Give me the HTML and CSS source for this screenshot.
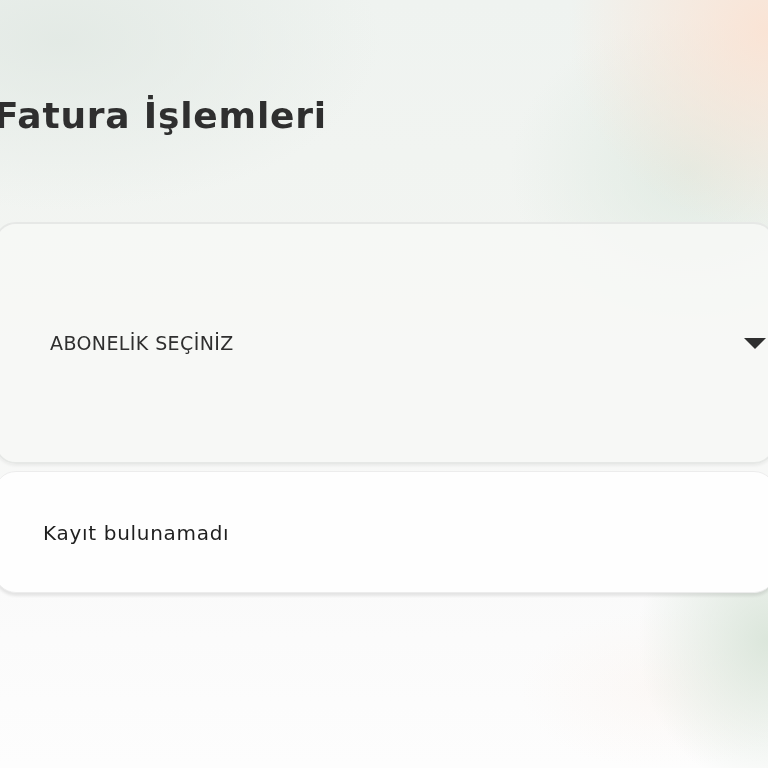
FILE: index.html
```html
<!DOCTYPE html>
<html lang="tr">
<head>
    <meta charset="UTF-8">
    <meta name="viewport" content="width=device-width, initial-scale=1.0">
    <title>Fatura İşlemleri</title>
    <link rel="stylesheet" href="styles.css">
</head>
<body>
    <div class="bg"></div>
    <div class="page">
        <h1 class="title">Fatura İşlemleri</h1>

        <div class="card select-card">
            <span class="select-label">ABONELİK SEÇİNİZ</span>
            <svg class="caret" width="22" height="11" viewBox="0 0 22 11">
                <path d="M0 0 H22 L11 11 Z" fill="#2f2f2f"/>
            </svg>
        </div>

        <div class="card empty-card">
            <span class="empty-text">Kayıt bulunamadı</span>
        </div>
    </div>
</body>
</html>
```

FILE: styles.css
```css
html, body { margin: 0; height: 100%; }
body {
    font-family: "DejaVu Sans", "Open Sans", sans-serif;
    color: #2f2f2f;
    overflow: hidden;
    background: #f5f6f4;
}
.bg {
    position: fixed;
    inset: 0;
    z-index: -1;
    background:
        radial-gradient(ellipse 200px 200px at 768px 30px, rgba(251, 226, 210, 0.9), rgba(251, 226, 210, 0) 100%),
        radial-gradient(ellipse 180px 150px at 690px 170px, rgba(222, 233, 224, 0.8), rgba(222, 233, 224, 0) 100%),
        radial-gradient(ellipse 320px 170px at 60px 40px, rgba(226, 233, 228, 0.9), rgba(226, 233, 228, 0) 100%),
        radial-gradient(ellipse 130px 150px at 768px 640px, rgba(216, 228, 216, 0.9), rgba(216, 228, 216, 0) 100%),
        radial-gradient(ellipse 140px 80px at 660px 690px, rgba(250, 238, 230, 0.3), rgba(250, 238, 230, 0) 100%),
        linear-gradient(180deg, #eff3f0 0%, #f3f5f2 40%, #fafafa 75%, #fdfdfd 100%);
}
.page {
    margin-left: -6px;
    width: 782px;
    padding-top: 88px;
}
.title {
    margin: 0 0 78px 0;
    font-size: 36px;
    line-height: 56px;
    font-weight: 700;
    letter-spacing: 0.8px;
    color: #2f2f2f;
}
.card {
    box-sizing: border-box;
    border-radius: 22px;
    display: flex;
    align-items: center;
}
.select-card {
    height: 242px;
    padding: 0 8px 0 54px;
    justify-content: space-between;
    background: rgba(247, 248, 246, 0.85);
    border: 2px solid #e6e8e6;
    box-shadow: 0 2px 3px rgba(0, 0, 0, 0.05);
}
.select-label {
    font-size: 19px;
    letter-spacing: 0.4px;
    color: #2f2f2f;
}
.caret { display: block; }
.empty-card {
    margin-top: 7px;
    height: 122px;
    padding: 2px 0 0 48px;
    background: #fefefe;
    border: 1px solid #ececec;
    box-shadow: 0 3px 3px rgba(0, 0, 0, 0.09);
}
.empty-text {
    font-size: 20px;
    letter-spacing: 0.7px;
    color: #1f1f1f;
}
```
